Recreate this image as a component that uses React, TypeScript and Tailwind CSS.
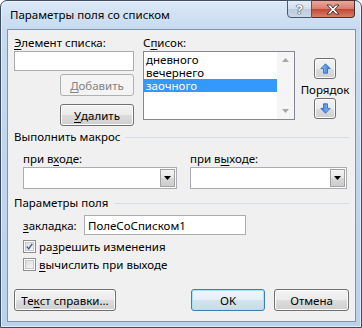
import { FC, ReactNode } from "react";

// Vista-style push button
const Btn: FC<{ w: string; children: ReactNode; primary?: boolean; disabled?: boolean; extra?: string }> = ({
  w,
  children,
  primary,
  disabled,
  extra = "",
}) => {
  let look =
    "border-[#707070] bg-[linear-gradient(#f2f2f2,#ebebeb_50%,#dddddd_50%,#cfcfcf)] shadow-[inset_0_0_0_1px_#fcfcfc] text-black";
  if (primary)
    look =
      "border-[#3c7fb1] bg-[linear-gradient(#eef6fb,#e4eff6_50%,#d3e4ef_50%,#c8dbe8)] shadow-[inset_0_0_0_1px_#a8e4f7] text-black";
  if (disabled) look = "border-[#adb2b5] bg-[#f4f4f4] text-[#838383]";
  return (
    <div
      className={`${w} ${extra} h-[22px] rounded-[3px] border flex items-center justify-center ${look}`}
    >
      {children}
    </div>
  );
};

const U: FC<{ children: ReactNode }> = ({ children }) => (
  <span className="underline underline-offset-[2px] decoration-1">{children}</span>
);

const SectionHead: FC<{ title: string; extra?: string }> = ({ title, extra = "" }) => (
  <div className={`flex items-center ${extra}`}>
    <span>{title}</span>
    <div className="flex-1 h-px bg-[#d5dfe5] ml-[5px] mt-px" />
  </div>
);

const Combo: FC<{ w: string }> = ({ w }) => (
  <div className={`${w} h-[22px] mt-px border border-[#abadb3] bg-white flex justify-end p-px`}>
    <div className="w-[15px] h-full border border-[#a2a2a2] bg-[linear-gradient(#f4f4f4,#e6e6e6_50%,#d8d8d8_50%,#cdcdcd)] flex items-center justify-center">
      <svg width="7" height="4" viewBox="0 0 7 4">
        <path d="M0 0H7L3.5 4Z" fill="#000" />
      </svg>
    </div>
  </div>
);

const Check: FC<{ checked?: boolean }> = ({ checked }) => (
  <div className="w-[13px] h-[13px] border border-[#8e8f8f] bg-white p-px">
    <div className="w-full h-full border border-[#c6c9cd] bg-[linear-gradient(135deg,#dcdcdc,#f6f6f6)] flex items-center justify-center">
      {checked && (
        <svg width="9" height="9" viewBox="0 0 9 9">
          <path d="M1 4.5L3.5 7.5L8 1" fill="none" stroke="#4a5f8f" strokeWidth="1.8" />
        </svg>
      )}
    </div>
  </div>
);

const Arrow: FC<{ down?: boolean }> = ({ down }) => (
  <svg width="11" height="11" viewBox="0 0 11 11" className={down ? "rotate-180" : ""}>
    <defs>
      <linearGradient id={down ? "ad" : "au"} x1="0" y1="0" x2="1" y2="0">
        <stop offset="0" stopColor="#8fc4f6" />
        <stop offset="1" stopColor="#2f78d6" />
      </linearGradient>
    </defs>
    <path
      d="M5.5 0.8L10.2 5.6H7.5V10.2H3.5V5.6H0.8Z"
      fill={`url(#${down ? "ad" : "au"})`}
      stroke="#2a63b8"
      strokeWidth="0.8"
    />
  </svg>
);

const SmallBtn: FC<{ down?: boolean }> = ({ down }) => (
  <div className="w-[22px] h-[21px] rounded-[3px] border border-[#707070] bg-[linear-gradient(#f2f2f2,#ebebeb_50%,#dddddd_50%,#cfcfcf)] shadow-[inset_0_0_0_1px_#fcfcfc] flex items-center justify-center">
    <Arrow down={down} />
  </div>
);

const App: FC = () => {
  const items = ["дневного", "вечернего", "заочного"];

  return (
    <div className="w-[362px] h-[328px] flex flex-col rounded-t-[7px] border border-[#3a4d63] bg-[linear-gradient(180deg,#dce9f7_0px,#c6daf0_28px,#bad2ec_100%)] shadow-[inset_0_0_0_1px_rgba(255,255,255,0.55)] font-['Noto_Sans',sans-serif] text-[11.5px] leading-[15px] text-black">
      {/* title bar */}
      <div className="h-[28px] flex items-start">
        <div className="pl-[9px] pt-[6px] flex-1">Параметры поля со списком</div>
        <div className="flex -mt-px mr-[6px]">
          <div className="w-[25px] h-[18px] rounded-bl-[4px] border border-[#4a5a6e] bg-[linear-gradient(#e6eef8,#d2deec_50%,#bccbdc_50%,#c9d6e6)] flex items-center justify-center font-bold text-[13px] text-white [text-shadow:0_0_1px_#333,0_0_1px_#333,0_0_1px_#333]">
            ?
          </div>
          <div className="w-[43px] h-[18px] rounded-br-[4px] border border-l-0 border-[#4a3030] bg-[linear-gradient(#e8a99c,#d77c6a_50%,#c34530_50%,#d6806a)] flex items-center justify-center">
            <svg width="14" height="11" viewBox="0 0 14 11">
              <path
                d="M1 1H4.5L7 4L9.5 1H13L8.8 5.5L13 10H9.5L7 7L4.5 10H1L5.2 5.5Z"
                fill="#fff"
                stroke="#3a2a2a"
                strokeWidth="0.9"
              />
            </svg>
          </div>
        </div>
      </div>

      {/* client area */}
      <div className="flex-1 ml-[6px] mr-[5px] mb-[5px] border border-[#7f93ad] bg-[#f0f0f0] px-[6px] flex flex-col">
        {/* list editing */}
        <div className="h-[97px] flex items-start">
          <div className="w-[120px] flex flex-col mt-[5px]">
            <div>
              <U>Э</U>лемент списка:
            </div>
            <div className="h-[20px] mt-px border border-[#abadb3] bg-white" />
            <Btn w="w-[74px]" disabled extra="self-end mt-[3px]">
              <U>Д</U>обавить
            </Btn>
            <Btn w="w-[74px]" extra="self-end mt-[8px]">
              <U>У</U>далить
            </Btn>
          </div>

          <div className="ml-[9px] mt-[5px] flex flex-col">
            <div>
              С<U>п</U>исок:
            </div>
            <div className="w-[152px] h-[69px] mt-px border border-[#828790] bg-white flex">
              <div className="flex-1 pt-px">
                {items.map((it, i) => (
                  <div
                    key={it}
                    className={`h-[13px] pl-[2px] overflow-hidden flex items-center ${i === 2 ? "bg-[#3399ff] text-white" : ""}`}
                  >
                    <span className="leading-[13px]">{it}</span>
                  </div>
                ))}
              </div>
              <div className="w-[17px] bg-[#f5f5f5] flex flex-col justify-between items-center py-[6px]">
                <svg width="7" height="4" viewBox="0 0 7 4">
                  <path d="M3.5 0L7 4H0Z" fill="#a6a6a6" />
                </svg>
                <svg width="7" height="4" viewBox="0 0 7 4">
                  <path d="M0 0H7L3.5 4Z" fill="#a6a6a6" />
                </svg>
              </div>
            </div>
          </div>

          <div className="ml-[7px] w-[46px] mt-[28px] flex flex-col items-center">
            <SmallBtn />
            <div className="mt-[3px] whitespace-nowrap">Порядок</div>
            <div className="mt-px">
              <SmallBtn down />
            </div>
          </div>
        </div>

        {/* macros */}
        <SectionHead title="Выполнить макрос" extra="mt-[2px]" />
        <div className="flex mt-[7px]">
          <div className="ml-[9px] flex flex-col">
            <div>
              при в<U>х</U>оде:
            </div>
            <Combo w="w-[154px]" />
          </div>
          <div className="ml-[13px] flex flex-col">
            <div>
              при в<U>ы</U>ходе:
            </div>
            <Combo w="w-[157px]" />
          </div>
        </div>

        {/* field options */}
        <SectionHead title="Параметры поля" extra="mt-[6px]" />
        <div className="flex items-center mt-[5px] ml-[9px]">
          <div className="w-[61px]">
            <U>з</U>акладка:
          </div>
          <div className="w-[162px] h-[20px] border border-[#abadb3] bg-white pl-[3px] flex items-center">
            ПолеСоСписком1
          </div>
        </div>
        <div className="flex items-center gap-[3px] mt-[4px] ml-[9px]">
          <Check checked />
          <span>
            ра<U>з</U>решить изменения
          </span>
        </div>
        <div className="flex items-center gap-[3px] mt-[3px] ml-[9px]">
          <Check />
          <span>
            <U>в</U>ычислить при выходе
          </span>
        </div>

        {/* buttons */}
        <div className="flex mt-[17px]">
          <Btn w="w-[102px]">
            Те<U>к</U>ст справки...
          </Btn>
          <div className="flex-1" />
          <Btn w="w-[74px]" primary>
            OK
          </Btn>
          <Btn w="w-[75px]" extra="ml-[9px]">
            Отмена
          </Btn>
        </div>
      </div>
    </div>
  );
};

export default App;
